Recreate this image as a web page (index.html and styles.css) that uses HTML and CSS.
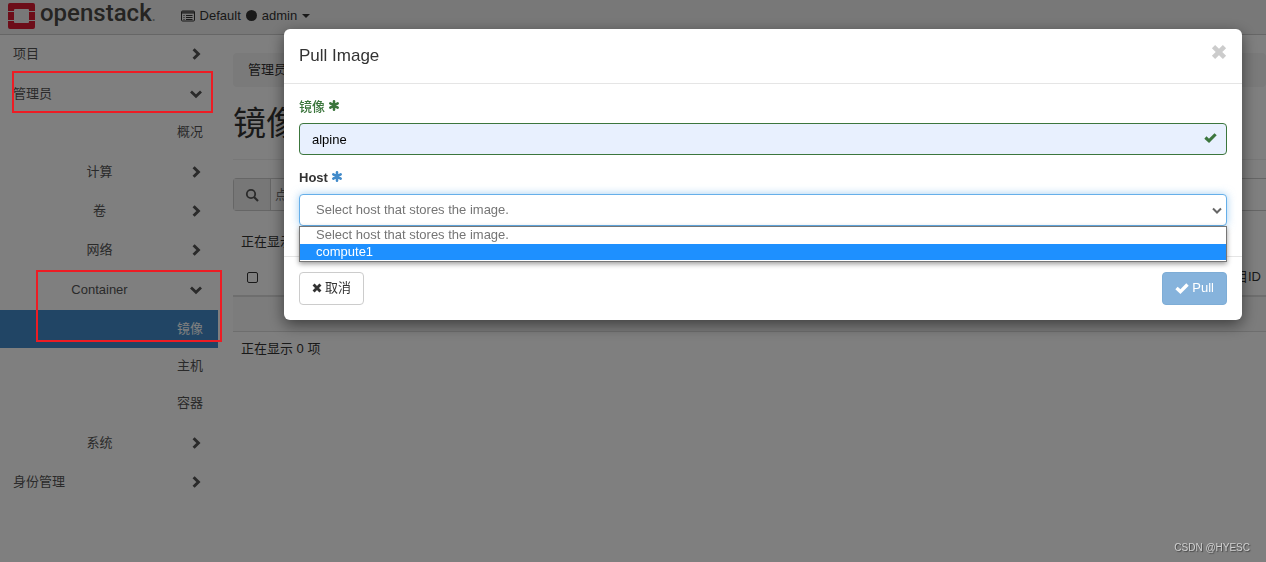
FILE: index.html
```
<!DOCTYPE html>
<html lang="zh-CN">
<head>
<meta charset="utf-8">
<title>Pull Image - OpenStack</title>
<link rel="stylesheet" href="styles.css">
</head>
<body>
<svg class="sprite" aria-hidden="true">
  <symbol id="right" viewBox="0 0 14 14"><path d="M4.600 2.200 9.400 7l-4.800 4.800" fill="none" stroke="currentColor" stroke-width="3"/></symbol>
  <symbol id="down" viewBox="0 0 14 14"><path d="M2 4.500 7 9.300l5-4.800" fill="none" stroke="currentColor" stroke-width="2.800"/></symbol>
  <symbol id="check" viewBox="0 0 14 14"><path d="M1.500 7 5.400 10.600 12.500 3.500" fill="none" stroke="currentColor" stroke-width="3.400"/></symbol>
  <symbol id="cross" viewBox="0 0 14 14"><path d="M2.200 2.200l9.600 9.600M11.800 2.200l-9.600 9.600" fill="none" stroke="currentColor" stroke-width="4"/></symbol>
  <symbol id="star" viewBox="0 0 14 14"><path d="M7 2v10M2.700 4.500l8.600 5M11.300 4.500l-8.600 5" fill="none" stroke="currentColor" stroke-width="3" stroke-linecap="round"/></symbol>
</svg>

<header class="topbar">
  <a class="brand" href="#">
    <svg class="brand-mark" viewBox="0 0 27 26" aria-hidden="true">
      <path fill="#da1a32" d="M2 0h23a2 2 0 0 1 2 2v6h-6V7a1 1 0 0 0-1-1H7a1 1 0 0 0-1 1v1H0V2a2 2 0 0 1 2-2zM0 9h6v8H0zM21 9h6v8h-6zM0 18h6v1a1 1 0 0 0 1 1h13a1 1 0 0 0 1-1v-1h6v6a2 2 0 0 1-2 2H2a2 2 0 0 1-2-2z"/>
    </svg>
    <span class="brand-name">openstack<span class="brand-dot">.</span></span>
  </a>
  <button class="context" type="button">
    <svg class="context-icon" viewBox="0 0 14 12" aria-hidden="true"><path fill="none" stroke="currentColor" d="M1.500 1h11a1 1 0 0 1 1 1v8a1 1 0 0 1-1 1h-11a1 1 0 0 1-1-1V2a1 1 0 0 1 1-1zM1 2h12M1 3h12M2.500 5.500h1M5 5.500h6.500M2.500 7.500h1M5 7.500h6.500M2.500 9.500h1M5 9.500h6.500"/></svg>
    <span>Default</span><span class="dot"></span><span>admin</span><span class="caret"></span>
  </button>
</header>

<div class="layout">
  <nav class="sidebar" aria-label="导航">
    <a class="item" href="#"><span>项目</span><svg class="icon"><use href="#right"/></svg></a>
    <a class="item open" href="#"><span>管理员</span><svg class="icon"><use href="#down"/></svg></a>
    <div class="leaves"><a class="leaf" href="#">概况</a></div>
    <a class="item sub" href="#"><span>计算</span><svg class="icon"><use href="#right"/></svg></a>
    <a class="item sub" href="#"><span>卷</span><svg class="icon"><use href="#right"/></svg></a>
    <a class="item sub" href="#"><span>网络</span><svg class="icon"><use href="#right"/></svg></a>
    <a class="item sub open" href="#"><span>Container</span><svg class="icon"><use href="#down"/></svg></a>
    <div class="leaves">
      <a class="leaf active" href="#">镜像</a>
      <a class="leaf" href="#">主机</a>
      <a class="leaf" href="#">容器</a>
    </div>
    <a class="item sub" href="#"><span>系统</span><svg class="icon"><use href="#right"/></svg></a>
    <a class="item" href="#"><span>身份管理</span><svg class="icon"><use href="#right"/></svg></a>
  </nav>

  <main class="content">
    <div class="breadcrumb">管理员</div>
    <h1 class="title">镜像</h1>
    <div class="search">
      <span class="search-icon"><svg viewBox="0 0 14 14" width="14" height="14" aria-hidden="true"><circle cx="6" cy="6" r="4.200" fill="none" stroke="currentColor" stroke-width="1.800"/><path d="M9 9l4 4" stroke="currentColor" stroke-width="2.200"/></svg></span>
      <input class="search-input" type="text" aria-label="搜索" placeholder="点击这里进行筛选">
    </div>
    <div class="count">正在显示 0 项</div>
    <table class="table">
      <thead><tr><th><input class="tick" type="checkbox" aria-label="全选"></th><th class="last">项目ID</th></tr></thead>
      <tbody><tr><td colspan="2"></td></tr></tbody>
    </table>
    <div class="count">正在显示 0 项</div>
  </main>
</div>

<div class="backdrop">
  <form class="modal" role="dialog" aria-labelledby="modal-title">
    <div class="modal-header">
      <h2 class="modal-title" id="modal-title">Pull Image</h2>
      <button class="close" type="button" aria-label="关闭"><svg class="close-icon"><use href="#cross"/></svg></button>
    </div>
    <div class="modal-body">
      <div class="field">
        <label class="label valid" for="image">镜像 <svg class="star"><use href="#star"/></svg></label>
        <div class="control">
          <input class="input" id="image" type="text" value="alpine">
          <svg class="feedback"><use href="#check"/></svg>
        </div>
      </div>
      <div class="field">
        <label class="label" for="host">Host <svg class="star blue"><use href="#star"/></svg></label>
        <div class="control">
          <select class="select" id="host"><option>Select host that stores the image.</option><option>compute1</option></select>
          <svg class="select-arrow" viewBox="0 0 10 8" aria-hidden="true"><path d="M1 1.500 5 5.500l4-4" fill="none" stroke="currentColor" stroke-width="2"/></svg>
          <ul class="options">
            <li class="option">Select host that stores the image.</li>
            <li class="option chosen">compute1</li>
          </ul>
        </div>
      </div>
    </div>
    <div class="modal-footer">
      <button class="btn" type="button"><svg class="btn-icon small"><use href="#cross"/></svg>取消</button>
      <button class="btn primary" type="submit"><svg class="btn-icon"><use href="#check"/></svg>Pull</button>
    </div>
  </form>
</div>

<div class="mark mark-admin"></div>
<div class="mark mark-container"></div>
<div class="watermark">CSDN @HYESC</div>
</body>
</html>
```
FILE: styles.css
```
* { box-sizing: border-box; }
body {
  margin: 0;
  min-height: 100vh;
  overflow: hidden;
  background: #fff;
  color: #333;
  font: 13px/18px "Liberation Sans", "Noto Sans CJK SC", sans-serif;
}
button, input, select { font: inherit; color: inherit; }
a { color: inherit; text-decoration: none; }
.sprite { position: absolute; width: 0; height: 0; }
.icon { width: 14px; height: 14px; }

.topbar {
  display: flex;
  align-items: center;
  gap: 25px;
  height: 35px;
  padding: 0 8px 3px;
  background: #f0f0f0;
  border-bottom: 1px solid #ccc;
}
.brand { display: flex; align-items: center; gap: 5px; }
.brand-mark { width: 27px; height: 26px; }
.brand-name { padding-bottom: 2px; font: 500 24px/26px Roboto, sans-serif; color: #4b4845; }
.brand-dot { font-size: 14px; color: #999; }
.context {
  display: flex;
  align-items: center;
  gap: 5px;
  padding: 0;
  border: 0;
  background: none;
}
.context-icon { width: 14px; height: 12px; }
.dot { width: 11px; height: 11px; border-radius: 50%; background: #333; }
.caret { border: 4px solid transparent; border-top-color: #333; border-bottom: 0; }

.layout { display: flex; }
.sidebar { flex: 0 0 218px; color: #555; }
.item {
  display: flex;
  align-items: center;
  justify-content: space-between;
  height: 39px;
  padding: 0 15px 2px 13px;
}
.item.sub { display: grid; grid-template-columns: 1fr auto; padding-left: 10px; }
.item.sub span { text-align: center; }
.item.open { padding-bottom: 0; }
.leaves { padding: 1px 0 2px; }
.leaf {
  display: flex;
  align-items: center;
  justify-content: flex-end;
  height: 37px;
  padding: 0 15px 1px;
}
.leaf.active { height: 38px; background: #428bca; color: #fff; }

.content { flex: 1; min-width: 0; padding: 18px 0 0 15px; }
.breadcrumb { padding: 8px 15px; background: #f5f5f5; border-radius: 4px; line-height: 18px; color: #333; }
.title {
  margin: 18px 0 18px;
  padding-bottom: 16px;
  border-bottom: 1px solid #eee;
  font-size: 33px;
  font-weight: 400;
  line-height: 38px;
}
.search { display: flex; height: 33px; border: 1px solid #ccc; border-right: 0; border-radius: 4px 0 0 4px; }
.search-icon { display: flex; align-items: center; justify-content: center; width: 37px; background: #eee; border-right: 1px solid #ccc; color: #555; }
.search-input { flex: 1; min-width: 0; padding: 0 4px; border: 0; background: none; }
.count { padding: 8px; line-height: 18px; margin-top: 14px; }
.table { width: 100%; border-collapse: collapse; }
.table th { height: 37px; padding: 0 5px 0 14px; border-bottom: 2px solid #ddd; text-align: left; font-weight: 400; }
.table .last { text-align: right; }
.table td { height: 35px; background: #f9f9f9; border-bottom: 1px solid #ddd; }
.table + .count { margin-top: 0; }
.tick { appearance: none; display: block; width: 11px; height: 11px; margin: 0; border: 1px solid #333; border-radius: 2px; }

.backdrop { position: fixed; inset: 0; background: rgba(0, 0, 0, .5); }
.modal {
  margin: 29px 24px 0 284px;
  background: #fff;
  border-radius: 6px;
  box-shadow: 0 5px 15px rgba(0, 0, 0, .5);
}
.modal-header {
  display: flex;
  align-items: center;
  justify-content: space-between;
  height: 55px;
  padding: 0 15px;
  border-bottom: 1px solid #e5e5e5;
}
.modal-title { margin: 0; font-size: 17px; font-weight: 400; line-height: 22px; }
.close { display: flex; padding: 0; margin: 0 0 8px; border: 0; background: none; color: #ccc; }
.close-icon { width: 16px; height: 16px; }
.modal-body { padding: 14px 15px 30px; }
.field + .field { margin-top: 14px; }
.label { display: flex; align-items: center; gap: 3px; height: 18px; margin-bottom: 7px; color: #333; font-weight: 700; }
.label.valid { color: #3c763d; font-weight: 500; }
.star { width: 12px; height: 13px; margin-bottom: 4px; }
.star.blue { color: #428bca; }
.control { position: relative; }
.input, .select {
  display: block;
  width: 100%;
  height: 32px;
  padding: 0 12px;
  border: 1px solid #3c763d;
  border-radius: 4px;
  background: #e8f0fe;
  color: #000;
}
.select {
  appearance: none;
  padding: 0 16px;
  border-color: #66afe9;
  background: #fff;
  color: #757575;
  box-shadow: 0 0 8px rgba(102, 175, 233, .6);
}
.feedback { position: absolute; top: 8px; right: 10px; width: 13px; height: 13px; color: #3c763d; }
.select-arrow { position: absolute; top: 13px; right: 5px; width: 10px; height: 8px; color: #666; }
.options {
  position: absolute;
  top: 32px;
  left: 0;
  right: 0;
  margin: 0;
  padding: 0 0 1px;
  list-style: none;
  border: 1px solid #767676;
  background: #fff;
  box-shadow: 0 2px 5px rgba(0, 0, 0, .4);
}
.option { height: 17px; padding: 0 16px; line-height: 16px; color: #757575; }
.option.chosen { height: 16px; background: #1e90ff; color: #fff; }
.modal-footer { display: flex; justify-content: space-between; padding: 15px; border-top: 1px solid #e5e5e5; }
.btn {
  display: flex;
  align-items: center;
  gap: 3px;
  height: 33px;
  padding: 0 12px 2px;
  border: 1px solid #ccc;
  border-radius: 4px;
  background: #fff;
}
.btn.primary { border-color: #7eadd6; background: #86b3dc; color: #fff; }
.btn-icon { width: 14px; height: 14px; }
.btn-icon.small { width: 10px; height: 10px; }

.mark { position: absolute; border: 2px solid #ed1c24; pointer-events: none; }
.mark-admin { left: 12px; top: 71px; width: 201px; height: 42px; }
.mark-container { left: 36px; top: 270px; width: 186px; height: 72px; }
.watermark { position: fixed; right: 16px; bottom: 6px; font-size: 10px; line-height: 16px; color: #d0d0d0; text-shadow: 1px 1px 1px #444; }
```
